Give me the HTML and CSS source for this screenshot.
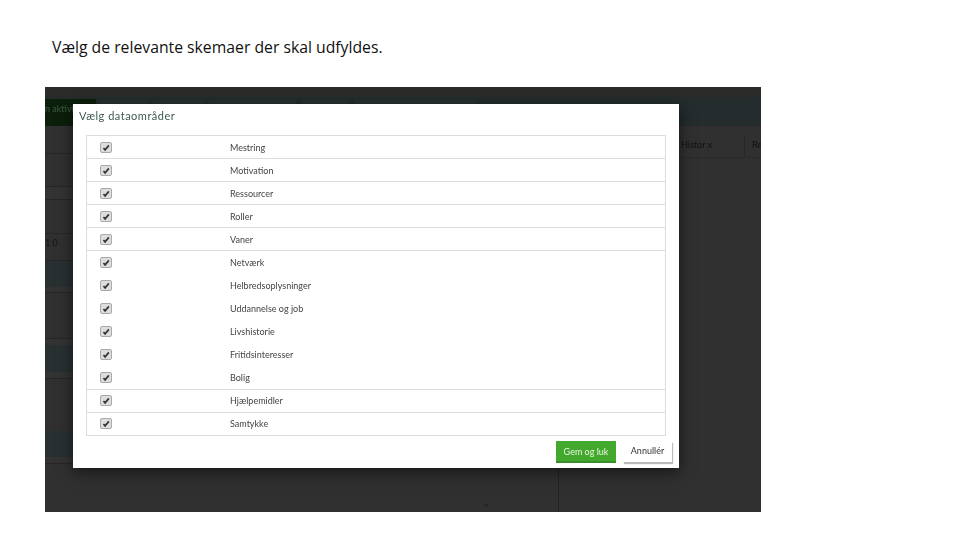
FILE: index.html
```html
<!DOCTYPE html>
<html lang="da">
  <head>
    <meta charset="UTF-8" />
    <title>Vælg dataområder</title>
    <link rel="stylesheet" href="styles.css">
  </head>
  <body>
    <svg class="defs" width="0" height="0">
      <symbol id="tick" viewBox="0 0 12 12">
        <path d="M2.6 6.6 4.8 9.2 9.8 3.2" fill="none" stroke="#333" stroke-width="2.2" />
      </symbol>
    </svg>
    <h1 class="caption">Vælg de relevante skemaer der skal udfyldes.</h1>
    <div class="shot">
      <div class="topstrip"></div>
      <nav class="nav">
        <span class="tab active">n aktivt</span>
        <span class="tab t1"></span>
        <span class="tab t2"></span>
        <span class="tab t3"></span>
        <span class="tab t4"></span>
        <span class="tab t5"></span>
      </nav>
      <div class="panels">
        <div class="left">
          <div class="row h28"></div>
          <div class="row h33"></div>
          <div class="row h13 pale"></div>
          <div class="row h34"></div>
          <div class="row h27 num">1 0</div>
          <div class="band h26"></div>
          <div class="row h6 pale"></div>
          <div class="row h46"></div>
          <div class="h6 pale"></div>
          <div class="band h27"></div>
          <div class="row h7 pale"></div>
          <div class="h52"></div>
          <div class="band h26"></div>
          <div class="row h7 pale"></div>
          <span class="mark">‹‹</span>
        </div>
        <div class="right">
          <div class="subtabs">
            <span class="subtab">Histor x</span>
            <span class="subtab last">Re</span>
          </div>
        </div>
      </div>
      <div class="modal">
        <h2 class="modal-title">Vælg dataområder</h2>
        <div class="list">
          <div class="item"><span class="check"><svg><use href="#tick" /></svg></span><span class="name">Mestring</span></div>
          <div class="item"><span class="check"><svg><use href="#tick" /></svg></span><span class="name">Motivation</span></div>
          <div class="item"><span class="check"><svg><use href="#tick" /></svg></span><span class="name">Ressourcer</span></div>
          <div class="item"><span class="check"><svg><use href="#tick" /></svg></span><span class="name">Roller</span></div>
          <div class="item"><span class="check"><svg><use href="#tick" /></svg></span><span class="name">Vaner</span></div>
          <div class="item open"><span class="check"><svg><use href="#tick" /></svg></span><span class="name">Netværk</span></div>
          <div class="item open"><span class="check"><svg><use href="#tick" /></svg></span><span class="name">Helbredsoplysninger</span></div>
          <div class="item open"><span class="check"><svg><use href="#tick" /></svg></span><span class="name">Uddannelse og job</span></div>
          <div class="item open"><span class="check"><svg><use href="#tick" /></svg></span><span class="name">Livshistorie</span></div>
          <div class="item open"><span class="check"><svg><use href="#tick" /></svg></span><span class="name">Fritidsinteresser</span></div>
          <div class="item"><span class="check"><svg><use href="#tick" /></svg></span><span class="name">Bolig</span></div>
          <div class="item"><span class="check"><svg><use href="#tick" /></svg></span><span class="name">Hjælpemidler</span></div>
          <div class="item"><span class="check"><svg><use href="#tick" /></svg></span><span class="name">Samtykke</span></div>
        </div>
        <div class="modal-btn">
          <button class="save">Gem og luk</button>
          <button class="cancel">Annullér</button>
        </div>
      </div>
    </div>
  </body>
</html>
```

FILE: styles.css
```css
html {
  font-size: 16px;
}
body {
  margin: 0;
  background-color: #fff;
  font-family: "Lato", "Liberation Sans", sans-serif;
}
.defs {
  position: absolute;
}
.caption {
  margin: 0;
  padding: 36px 0 0 52px;
  height: 87px;
  box-sizing: border-box;
  font-family: "Open Sans", "Liberation Sans", sans-serif;
  font-size: 15.75px;
  line-height: 22px;
  font-weight: 400;
  color: #111;
}
.shot {
  position: relative;
  width: 716px;
  height: 425px;
  margin-left: 45px;
  overflow: hidden;
  background-color: #303030;
  color: #111;
  filter: blur(0.3px);
}
.topstrip {
  height: 10px;
  background-color: #2b2b29;
}
.nav {
  display: flex;
  height: 29px;
  padding-top: 3px;
  box-sizing: border-box;
  background-color: #242c2e;
}
.nav .tab {
  height: 26px;
  background-color: #293032;
}
.nav .active {
  width: 51px;
  margin-top: -1px;
  height: 27px;
  background-color: #0b1f0a;
  color: #3f5c3f;
  font-size: 9px;
  line-height: 20px;
  white-space: nowrap;
  overflow: hidden;
}
.t1 { width: 47px; margin-left: 5px; }
.t2 { width: 52px; margin-left: 5px; }
.t3 { width: 87px; margin-left: 4px; }
.t4 { width: 47px; margin-left: 6px; }
.t5 { width: 122px; margin-left: 5px; }

.panels {
  display: flex;
  height: 386px;
}
.left {
  position: relative;
  width: 513px;
  border-right: 1px solid #222;
  box-sizing: content-box;
}
.row {
  box-sizing: border-box;
  border-bottom: 1px solid #262626;
}
.pale {
  background-color: #333;
}
.band {
  background-color: #283032;
}
.h6 { height: 6px; }
.h7 { height: 7px; }
.h13 { height: 13px; }
.h26 { height: 26px; }
.h27 { height: 27px; }
.h28 { height: 28px; }
.h33 { height: 33px; }
.h34 { height: 34px; }
.h46 { height: 46px; }
.h52 { height: 52px; }
.num {
  font-size: 9px;
  line-height: 18px;
  color: #151515;
}
.mark {
  position: absolute;
  left: 439px;
  top: 373px;
  font-size: 9px;
  color: #151515;
}
.right {
  flex: 1;
  padding-top: 9px;
}
.subtabs {
  display: flex;
  justify-content: flex-end;
  height: 22px;
  border-bottom: 1px solid #2a2a2a;
  font-size: 9px;
  line-height: 20px;
}
.subtab {
  width: 66px;
  padding-left: 2px;
  border-right: 1px solid #282828;
  box-sizing: border-box;
  white-space: nowrap;
}
.subtab.last {
  width: 16px;
  padding-left: 7px;
  border-right: none;
  overflow: hidden;
}

.modal {
  position: absolute;
  left: 28px;
  top: 17px;
  box-sizing: border-box;
  width: 606px;
  height: 364px;
  padding: 0 13px;
  background-color: #fff;
  box-shadow: 0 4px 14px rgba(0, 0, 0, 0.55);
}
.modal-title {
  margin: 0 0 0 -7px;
  height: 31px;
  font-size: 11px;
  font-weight: 400;
  line-height: 24px;
  letter-spacing: 0.5px;
  color: #3c5a50;
}
.list {
  border: 1px solid #ddd;
  border-bottom: none;
}
.item {
  display: flex;
  align-items: center;
  box-sizing: border-box;
  height: 23.08px;
  border-bottom: 1px solid #ddd;
}
.item.open {
  border-bottom-color: transparent;
}
.check {
  display: block;
  box-sizing: border-box;
  width: 12px;
  height: 11px;
  margin-left: 13px;
  border: 1px solid #aaa;
  border-radius: 2px;
  background-color: #ddd;
}
.check svg {
  display: block;
  width: 10px;
  height: 9px;
}
.name {
  margin-left: 118px;
  font-size: 9px;
  color: #444;
}
.modal-btn {
  display: flex;
  justify-content: flex-end;
  gap: 7px;
  padding: 5px 7px 0 0;
  margin-right: -13px;
}
.modal-btn button {
  height: 22px;
  border: none;
  padding: 0 0 2px;
  font-family: inherit;
  font-size: 9px;
}
.modal-btn .save {
  width: 60px;
  background-color: #43a82e;
  border-bottom: 2px solid #3a8f2a;
  padding-bottom: 0;
  color: #e8f6e0;
}
.modal-btn .cancel {
  width: 49px;
  height: 21px;
  background-color: #fff;
  box-shadow: 1px 2px 1px #bbb;
  color: #333;
}
```
